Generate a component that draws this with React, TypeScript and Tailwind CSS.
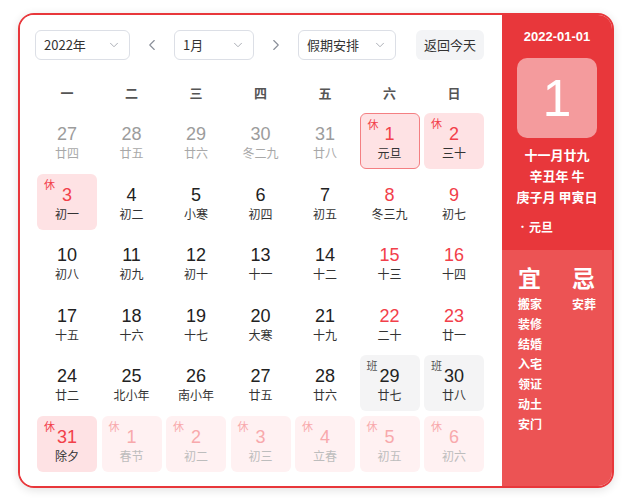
import React from 'react';
import { ChevronDown, ChevronLeft, ChevronRight } from 'lucide-react';

type Kind = 'prev' | 'normal' | 'weekend' | 'holiday' | 'selected' | 'work' | 'next';

interface Day {
  d: number;
  lunar: string;
  kind: Kind;
}

const rows: Day[][] = [
  [
    { d: 27, lunar: '廿四', kind: 'prev' },
    { d: 28, lunar: '廿五', kind: 'prev' },
    { d: 29, lunar: '廿六', kind: 'prev' },
    { d: 30, lunar: '冬二九', kind: 'prev' },
    { d: 31, lunar: '廿八', kind: 'prev' },
    { d: 1, lunar: '元旦', kind: 'selected' },
    { d: 2, lunar: '三十', kind: 'holiday' },
  ],
  [
    { d: 3, lunar: '初一', kind: 'holiday' },
    { d: 4, lunar: '初二', kind: 'normal' },
    { d: 5, lunar: '小寒', kind: 'normal' },
    { d: 6, lunar: '初四', kind: 'normal' },
    { d: 7, lunar: '初五', kind: 'normal' },
    { d: 8, lunar: '冬三九', kind: 'weekend' },
    { d: 9, lunar: '初七', kind: 'weekend' },
  ],
  [
    { d: 10, lunar: '初八', kind: 'normal' },
    { d: 11, lunar: '初九', kind: 'normal' },
    { d: 12, lunar: '初十', kind: 'normal' },
    { d: 13, lunar: '十一', kind: 'normal' },
    { d: 14, lunar: '十二', kind: 'normal' },
    { d: 15, lunar: '十三', kind: 'weekend' },
    { d: 16, lunar: '十四', kind: 'weekend' },
  ],
  [
    { d: 17, lunar: '十五', kind: 'normal' },
    { d: 18, lunar: '十六', kind: 'normal' },
    { d: 19, lunar: '十七', kind: 'normal' },
    { d: 20, lunar: '大寒', kind: 'normal' },
    { d: 21, lunar: '十九', kind: 'normal' },
    { d: 22, lunar: '二十', kind: 'weekend' },
    { d: 23, lunar: '廿一', kind: 'weekend' },
  ],
  [
    { d: 24, lunar: '廿二', kind: 'normal' },
    { d: 25, lunar: '北小年', kind: 'normal' },
    { d: 26, lunar: '南小年', kind: 'normal' },
    { d: 27, lunar: '廿五', kind: 'normal' },
    { d: 28, lunar: '廿六', kind: 'normal' },
    { d: 29, lunar: '廿七', kind: 'work' },
    { d: 30, lunar: '廿八', kind: 'work' },
  ],
  [
    { d: 31, lunar: '除夕', kind: 'holiday' },
    { d: 1, lunar: '春节', kind: 'next' },
    { d: 2, lunar: '初二', kind: 'next' },
    { d: 3, lunar: '初三', kind: 'next' },
    { d: 4, lunar: '立春', kind: 'next' },
    { d: 5, lunar: '初五', kind: 'next' },
    { d: 6, lunar: '初六', kind: 'next' },
  ],
];

const weekdays = ['一', '二', '三', '四', '五', '六', '日'];
const yi = ['搬家', '装修', '结婚', '入宅', '领证', '动土', '安门'];

function DayCell({ day }: { day: Day }) {
  const { kind } = day;
  const box =
    kind === 'selected'
      ? 'bg-[#fee2e4] border border-[#f47f82]'
      : kind === 'holiday'
      ? 'bg-[#fee2e4]'
      : kind === 'next'
      ? 'bg-[#fff1f2]'
      : kind === 'work'
      ? 'bg-[#f4f4f5]'
      : '';
  const num =
    kind === 'prev'
      ? 'text-[#9c9c9c]'
      : kind === 'next'
      ? 'text-[#f8a9ac]'
      : kind === 'normal' || kind === 'work'
      ? 'text-[#222]'
      : 'text-[#f2404a]';
  const lunar =
    kind === 'prev'
      ? 'text-[#a8a8a8]'
      : kind === 'next'
      ? 'text-[#bdbdbd]'
      : 'text-[#333]';
  const badge =
    kind === 'holiday' || kind === 'selected' ? (
      <span className="absolute left-[7px] top-[2px] text-[11px] text-[#f2404a]">休</span>
    ) : kind === 'next' ? (
      <span className="absolute left-[7px] top-[2px] text-[11px] text-[#f8a9ac]">休</span>
    ) : kind === 'work' ? (
      <span className="absolute left-[7px] top-[2px] text-[11px] text-[#555]">班</span>
    ) : null;

  return (
    <div className={`relative h-[56px] rounded-md flex flex-col items-center justify-center pt-[3px] ${box}`}>
      {badge}
      <span className={`text-[18px] leading-[20px] ${num}`} style={{ fontFamily: '"Liberation Sans", Arial, sans-serif' }}>
        {day.d}
      </span>
      <span className={`text-[12px] leading-[17px] ${lunar}`}>{day.lunar}</span>
    </div>
  );
}

function Select({ label, width }: { label: string; width: string }) {
  return (
    <div className={`${width} h-[30px] border border-[#dcdfe6] rounded-md flex items-center justify-between pl-[8px] pr-[8px] text-[13px] text-[#333]`}>
      <span>{label}</span>
      <ChevronDown className="w-[14px] h-[14px] text-[#a0a4ab]" strokeWidth={1.5} />
    </div>
  );
}

export default function App() {
  return (
    <div
      className="w-[630px] h-[504px] bg-white pl-[18px] pt-[13px]"
      style={{ fontFamily: '"Noto Sans CJK SC", "Liberation Sans", sans-serif' }}
    >
      <div className="w-[596px] h-[475px] flex rounded-[16px] border-2 border-[#e8373b] overflow-hidden shadow-[0_2px_10px_rgba(0,0,0,0.12)]">
        {/* Left: month grid */}
        <div className="flex-1 bg-white pl-[17px] pr-[18px] pt-[15px]">
          <div className="flex items-center h-[30px] -ml-[2px]">
            <Select label="2022年" width="w-[95px]" />
            <div className="w-[44px] flex justify-center">
              <ChevronLeft className="w-[18px] h-[18px] text-[#8a8f99]" strokeWidth={1.5} />
            </div>
            <Select label="1月" width="w-[80px]" />
            <div className="w-[44px] flex justify-center">
              <ChevronRight className="w-[18px] h-[18px] text-[#8a8f99]" strokeWidth={1.5} />
            </div>
            <Select label="假期安排" width="w-[98px]" />
            <div className="ml-auto w-[68px] h-[30px] rounded-md bg-[#f3f4f6] flex items-center justify-center text-[13px] text-[#333]">
              返回今天
            </div>
          </div>

          <div className="grid grid-cols-7 gap-x-[4.5px] mt-[13px] h-[40px] items-center">
            {weekdays.map((w) => (
              <div key={w} className="text-center text-[13px] font-bold text-[#555]">
                {w}
              </div>
            ))}
          </div>

          <div className="grid grid-cols-7 gap-[4.5px]">
            {rows.flat().map((day, i) => (
              <DayCell key={i} day={day} />
            ))}
          </div>
        </div>

        {/* Right: day detail */}
        <div className="w-[110px] flex flex-col text-white">
          <div className="bg-[#e8373b] h-[235px] flex flex-col items-center pt-[12px]">
            <div className="text-[13px] font-bold leading-[20px]" style={{ fontFamily: '"Liberation Sans", Arial, sans-serif' }}>
              2022-01-01
            </div>
            <div className="mt-[11px] w-[80px] h-[80px] rounded-[10px] bg-white/50 flex items-center justify-center">
              <span className="text-[52px] leading-none font-light" style={{ fontFamily: '"Liberation Sans", Arial, sans-serif' }}>
                1
              </span>
            </div>
            <div className="mt-[6px] text-[13px] font-bold leading-[21px] text-center">
              <div>十一月廿九</div>
              <div>辛丑年 牛</div>
              <div>庚子月 甲寅日</div>
            </div>
            <div className="self-start pl-[16px] mt-[12px] text-[12px] font-bold leading-[16px] flex items-center">
              <span className="text-[9px] mr-[2px]">•</span>
              <span>元旦</span>
            </div>
          </div>
          <div className="flex-1 bg-[#ec5354] px-[16px] pt-[10px] flex justify-between">
            <div className="flex flex-col">
              <div className="text-[23px] font-bold leading-[34px]">宜</div>
              {yi.map((t) => (
                <div key={t} className="text-[12px] font-bold leading-[20px]">
                  {t}
                </div>
              ))}
            </div>
            <div className="flex flex-col">
              <div className="text-[23px] font-bold leading-[34px]">忌</div>
              <div className="text-[12px] font-bold leading-[20px]">安葬</div>
            </div>
          </div>
        </div>
      </div>
    </div>
  );
}
